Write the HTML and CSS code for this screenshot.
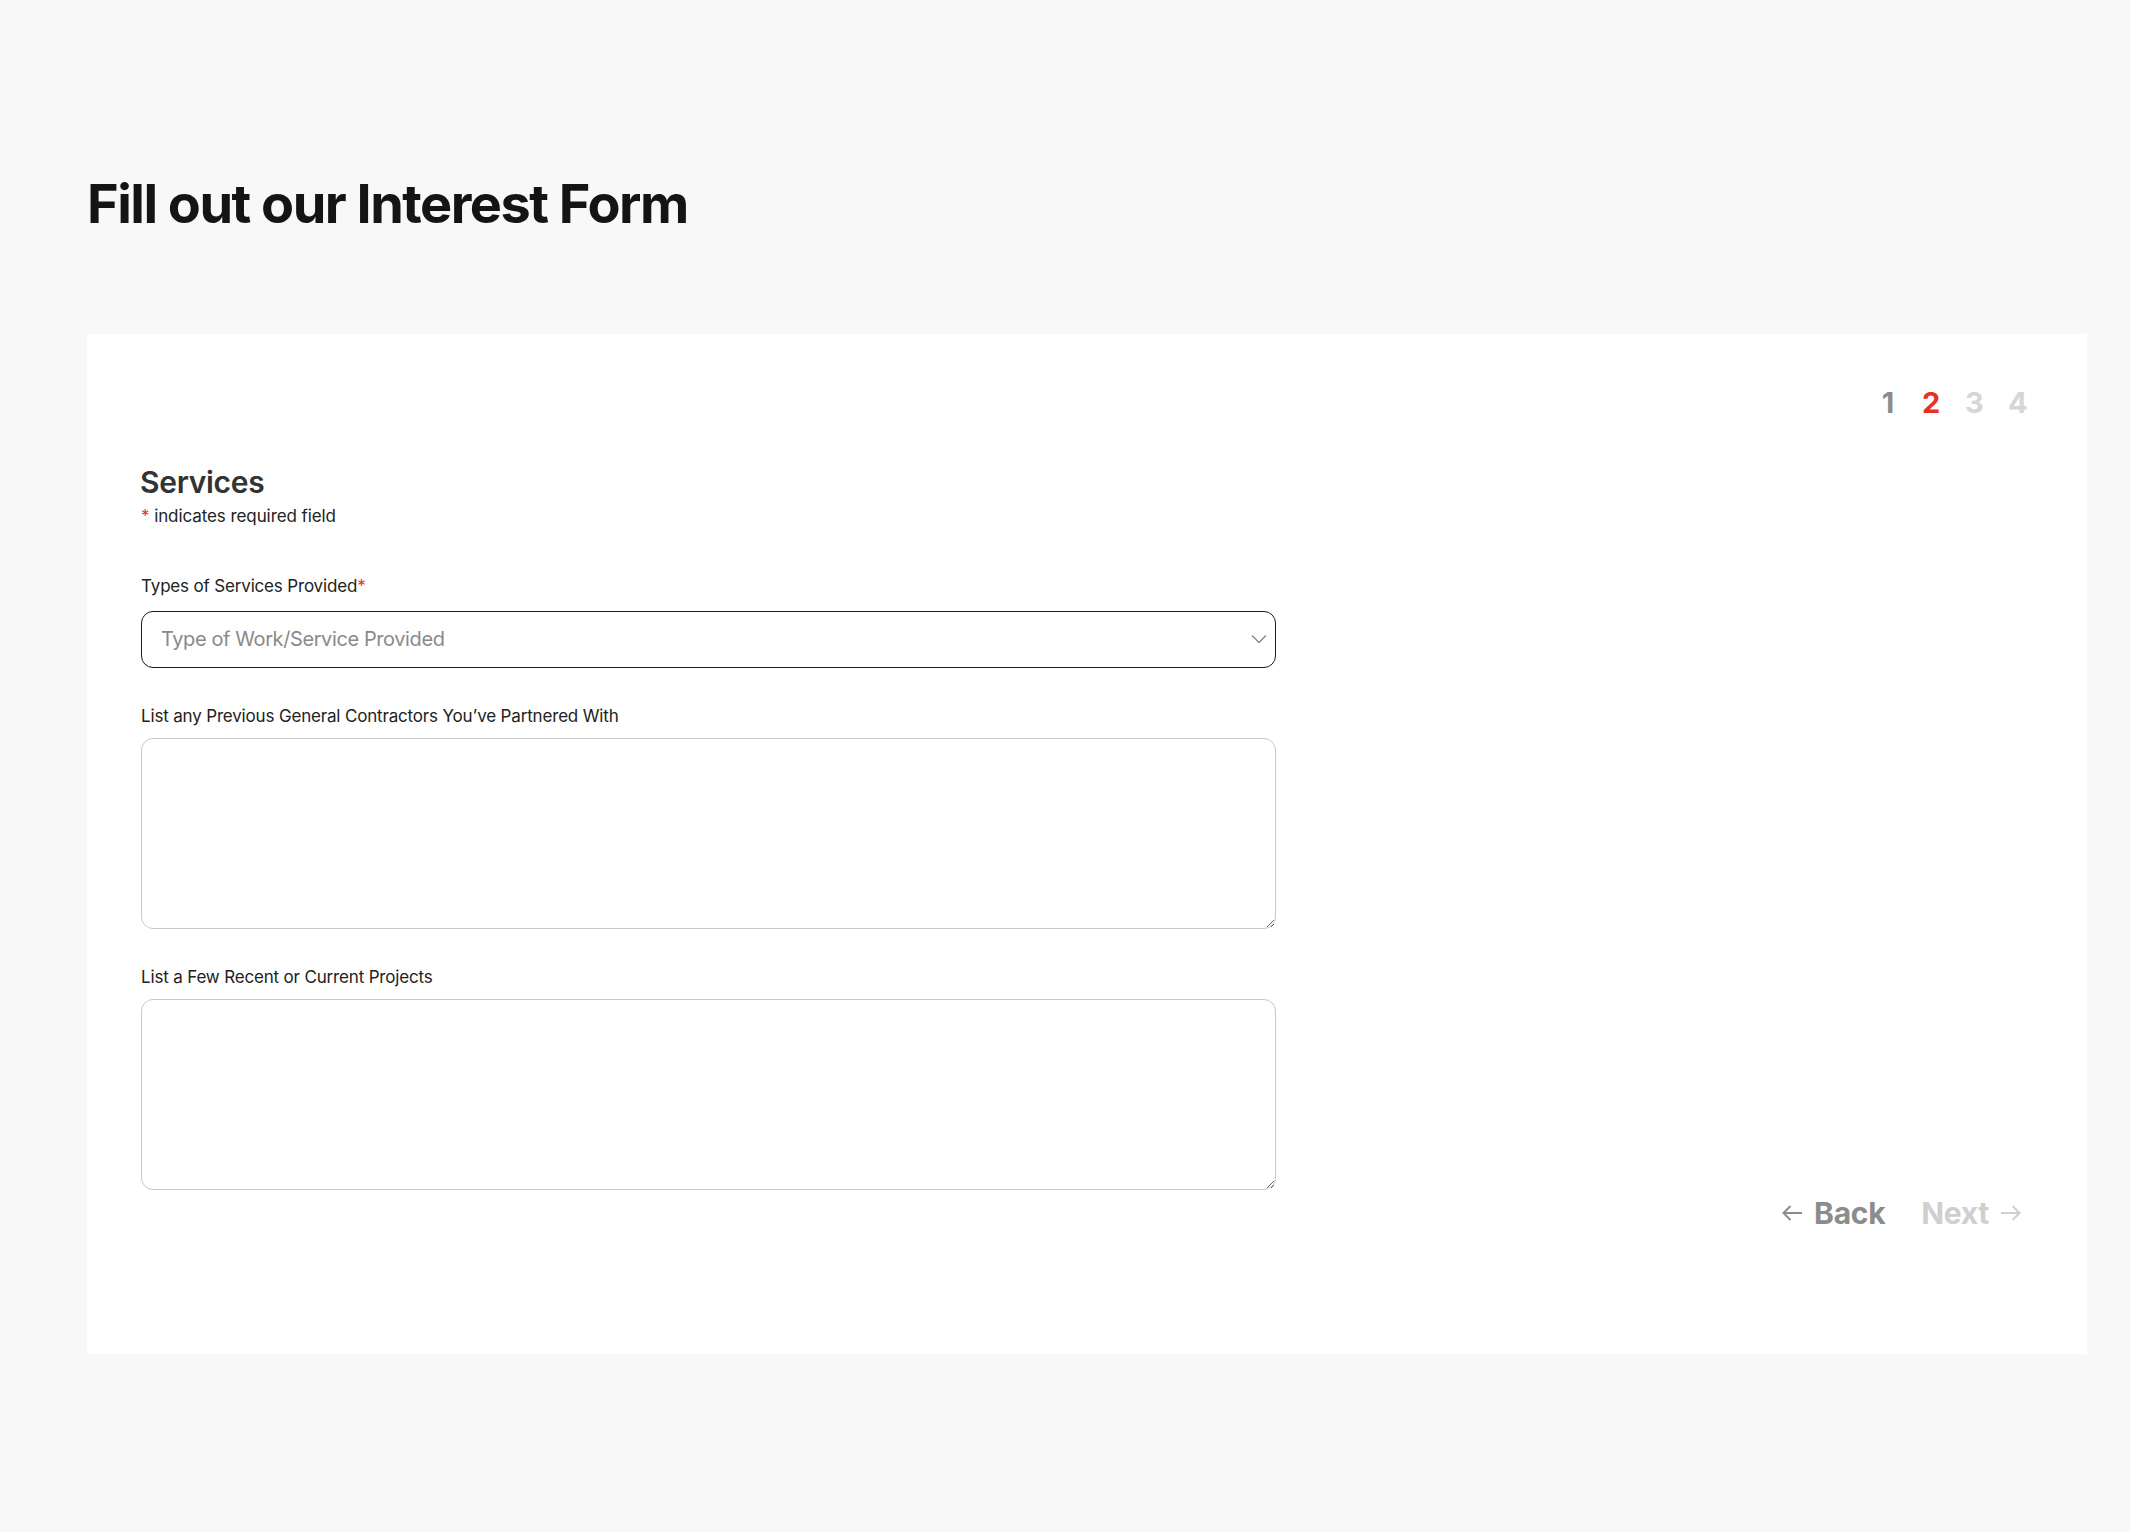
FILE: index.html
```html
<!DOCTYPE html>
<html lang="en">
<head>
<meta charset="utf-8">
<title>Interest Form</title>
<link rel="stylesheet" href="styles.css">
</head>
<body>
<main class="page">
  <h1 class="title">Fill out our Interest Form</h1>
  <section class="card">
    <nav class="steps">
      <span class="step step-done">1</span>
      <span class="step step-current">2</span>
      <span class="step">3</span>
      <span class="step">4</span>
    </nav>
    <div class="form">
      <h2 class="section-title">Services</h2>
      <p class="req-note"><span class="req">*</span> indicates required field</p>

      <div class="field field-first">
        <label class="label" for="svc">Types of Services Provided<span class="req">*</span></label>
        <div class="select-wrap">
          <select class="select" id="svc">
            <option>Type of Work/Service Provided</option>
          </select>
          <svg class="chevron" width="16" height="10" viewBox="0 0 16 10"><polyline points="1,1.5 8,8.5 15,1.5" fill="none" stroke="#8a8a8a" stroke-width="1.5"/></svg>
        </div>
      </div>

      <div class="field">
        <label class="label" for="gc">List any Previous General Contractors You’ve Partnered With</label>
        <textarea class="textarea" id="gc"></textarea>
      </div>

      <div class="field">
        <label class="label" for="proj">List a Few Recent or Current Projects</label>
        <textarea class="textarea" id="proj"></textarea>
      </div>
    </div>
    <div class="actions">
      <button class="nav-btn nav-back" type="button">
        <svg width="22" height="18" viewBox="0 0 22 18"><path d="M21 9H2.5M9.5 2L2.5 9l7 7" fill="none" stroke="currentColor" stroke-width="2"/></svg>
        Back
      </button>
      <button class="nav-btn nav-next" type="button">
        Next
        <svg width="22" height="18" viewBox="0 0 22 18"><path d="M1 9h18.5M12.5 2l7 7-7 7" fill="none" stroke="currentColor" stroke-width="2"/></svg>
      </button>
    </div>
  </section>
</main>
</body>
</html>
```
FILE: styles.css
```css
* { box-sizing: border-box; }

html, body {
  margin: 0;
  background: #f8f8f8;
  font-family: Inter, "Noto Sans", sans-serif;
  color: #222;
}

.page {
  padding: 172px 43px 0 87px;
  min-height: 1532px;
}

.title {
  margin: 0;
  font-size: 54px;
  line-height: 1.2;
  font-weight: 700;
  letter-spacing: -0.028em;
  color: #141414;
}

.card {
  margin-top: 97px;
  background: #fff;
  padding: 51px 61px 123px 54px;
}

.steps {
  display: flex;
  justify-content: flex-end;
  gap: 25px;
}

.step {
  width: 18px;
  text-align: center;
  font-size: 29px;
  line-height: 35px;
  font-weight: 700;
  color: #d6d6d6;
}

.step-done { color: #8c8c8c; }
.step-current { color: #e8321e; }

.form {
  width: 1135px;
  margin-top: 44px;
}

.section-title {
  margin: 0 0 0 -1px;
  font-size: 30px;
  line-height: 36px;
  font-weight: 600;
  letter-spacing: -0.01em;
  color: #333;
}

.req-note {
  margin: 5px 0 0;
  font-size: 17px;
  line-height: 22px;
  letter-spacing: -0.005em;
  color: #222;
}

.req { color: #e8321e; }

.field {
  display: flex;
  flex-direction: column;
  gap: 12px;
  margin-top: 38px;
}

.field-first {
  margin-top: 49px;
  gap: 15px;
}

.label {
  font-size: 17px;
  line-height: 20px;
  letter-spacing: -0.01em;
  color: #222;
}

.select-wrap {
  position: relative;
}

.select {
  display: block;
  width: 100%;
  height: 57px;
  appearance: none;
  -webkit-appearance: none;
  background: #fff;
  border: 1.5px solid #1a1a1a;
  border-radius: 12px;
  padding: 0 40px 0 19px;
  font-family: inherit;
  font-size: 20px;
  letter-spacing: -0.02em;
  color: #8a8a8a;
}

.chevron {
  position: absolute;
  right: 9px;
  top: 23px;
}

.textarea {
  display: block;
  width: 100%;
  height: 191px;
  border: 1px solid #c8c8c8;
  border-radius: 12px;
  background: #fff;
  font-family: inherit;
  font-size: 18px;
  resize: both;
  padding: 12px 18px;
}

.actions {
  display: flex;
  justify-content: flex-end;
  gap: 36px;
  margin-top: 6px;
  padding-right: 4px;
}

.nav-btn {
  display: flex;
  align-items: center;
  gap: 11px;
  background: none;
  border: 0;
  padding: 0;
  font-family: inherit;
  font-size: 30px;
  line-height: 35px;
  font-weight: 700;
  letter-spacing: -0.01em;
  cursor: pointer;
}

.nav-back { color: #8c8c8c; }
.nav-next { color: #cfcfcf; }
```
